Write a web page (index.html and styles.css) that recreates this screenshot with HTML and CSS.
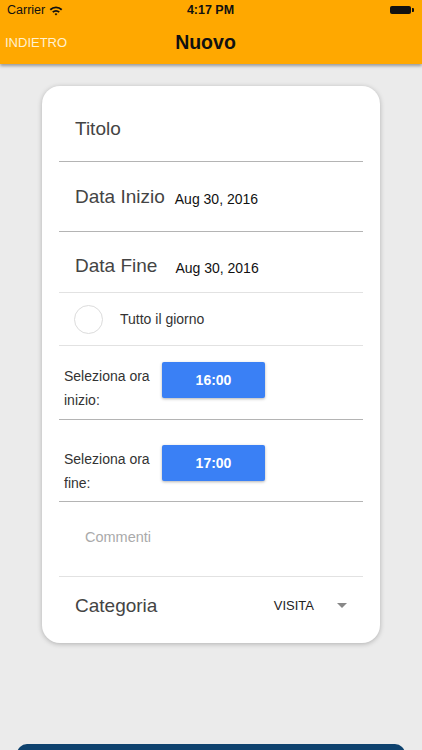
FILE: index.html
```html
<!DOCTYPE html>
<html lang="it">

<head>
    <meta charset="UTF-8">
    <meta name="viewport" content="width=device-width, initial-scale=1.0">
    <title>Nuovo</title>
    <link rel="stylesheet" href="styles.css">
</head>

<body>
    <!-- barra in alto -->
    <div class="top">
        <div class="status">
            <div class="carrier">
                Carrier
                <svg class="wifi" width="14" height="11" viewBox="0 0 13 10">
                    <path d="M0.6 3.6 A8.5 8.5 0 0 1 12.4 3.6 L11.2 4.9 A6.7 6.7 0 0 0 1.8 4.9 Z" fill="#111"/>
                    <path d="M2.9 5.9 A5.3 5.3 0 0 1 10.1 5.9 L8.9 7.2 A3.5 3.5 0 0 0 4.1 7.2 Z" fill="#111"/>
                    <path d="M5.2 8.2 A2 2 0 0 1 7.8 8.2 L6.5 9.6 Z" fill="#111"/>
                </svg>
            </div>
            <div class="clock">4:17 PM</div>
            <div class="battery">
                <span class="battery-body"></span><span class="battery-tip"></span>
            </div>
        </div>
        <div class="nav">
            <span class="back">INDIETRO</span>
            <span class="title">Nuovo</span>
        </div>
    </div>

    <!-- modulo -->
    <div class="card">
        <div class="row row-title">
            <span class="big">Titolo</span>
        </div>
        <div class="row row-start">
            <span class="big">Data Inizio</span>
            <span class="date">Aug 30, 2016</span>
        </div>
        <div class="row row-end">
            <span class="big">Data Fine</span>
            <span class="date date-end">Aug 30, 2016</span>
        </div>
        <div class="row row-check light">
            <span class="radio"></span>
            <span class="small">Tutto il giorno</span>
        </div>
        <div class="row row-time">
            <span class="time-label">Seleziona ora<br>inizio:</span>
            <button class="time-btn">16:00</button>
        </div>
        <div class="row row-time row-time2">
            <span class="time-label">Seleziona ora<br>fine:</span>
            <button class="time-btn">17:00</button>
        </div>
        <div class="row row-comment light">
            <span class="placeholder">Commenti</span>
        </div>
        <div class="row row-cat">
            <span class="big">Categoria</span>
            <span class="select">VISITA <span class="caret"></span></span>
        </div>
    </div>

    <div class="bottom-bar"></div>
</body>

</html>
```

FILE: styles.css
```css
html,
body {
    height: 100%;
}

body {
    margin: 0;
    background: #ebebeb;
    font-family: "Liberation Sans", Arial, sans-serif;
    overflow: hidden;
}

.top {
    background: #ffa800;
    box-shadow: 0 2px 3px rgba(0, 0, 0, 0.35);
    position: relative;
    z-index: 1;
}

.status {
    height: 20px;
    display: flex;
    align-items: center;
    justify-content: space-between;
    padding: 0 7px;
    font-size: 12.5px;
    color: #111;
}

.carrier {
    width: 120px;
    display: flex;
    align-items: center;
    gap: 4px;
}

.clock {
    font-weight: bold;
}

.battery {
    width: 120px;
    display: flex;
    justify-content: flex-end;
    align-items: center;
    margin-right: 1px;
}

.battery-body {
    width: 21px;
    height: 8px;
    background: #111;
    border-radius: 2px;
}

.battery-tip {
    width: 2px;
    height: 4px;
    background: #111;
    margin-left: 1px;
    border-radius: 0 1px 1px 0;
}

.nav {
    height: 44px;
    display: flex;
    align-items: center;
    padding-left: 5px;
}

.back {
    color: #fff1d0;
    font-size: 13px;
}

.title {
    margin-left: 108px;
    font-size: 19.5px;
    font-weight: bold;
    color: #111;
}

.card {
    margin: 22px 42px 0;
    background: #fff;
    border-radius: 18px;
    padding: 0 17px;
    box-shadow: 0 1px 5px rgba(0, 0, 0, 0.25);
}

.row {
    display: flex;
    border-bottom: 1.5px solid #b4b4b4;
    box-sizing: border-box;
}

.row.light {
    border-bottom: 1px solid #e2e2e2;
}

.big {
    font-size: 19px;
    color: #444;
}

.row-title {
    height: 76px;
    align-items: flex-end;
    padding: 0 16px 21px;
}

.row-start {
    height: 70px;
    align-items: flex-end;
    padding: 0 16px 23px;
}

.row-end {
    height: 61px;
    align-items: flex-end;
    padding: 0 16px 15px;
    border-bottom: 1px solid #e2e2e2;
}

.date {
    font-size: 14px;
    color: #111;
    margin-left: 10px;
    margin-bottom: 1px;
}

.date-end {
    margin-left: 18px;
}

.row-check {
    height: 53px;
    align-items: center;
    padding-left: 15px;
}

.radio {
    width: 27px;
    height: 27px;
    border: 1px solid #dcdcdc;
    border-radius: 50%;
}

.small {
    font-size: 14px;
    color: #333;
    margin-left: 17px;
}

.row-time {
    height: 74px;
    align-items: flex-start;
    padding: 16px 0 0 5px;
}

.row-time2 {
    height: 82px;
    padding-top: 25px;
}

.time-label {
    width: 98px;
    font-size: 14px;
    line-height: 24px;
    color: #333;
    margin-top: 2px;
}

.time-btn {
    width: 103px;
    height: 36px;
    border: none;
    border-radius: 2px;
    background: #3a80f5;
    color: #fff;
    font-family: inherit;
    font-size: 14px;
    font-weight: bold;
    box-shadow: 0 1px 3px rgba(0, 0, 0, 0.3);
}

.row-comment {
    height: 75px;
    align-items: center;
    padding: 0 0 4px 26px;
}

.placeholder {
    font-size: 14.5px;
    color: #aaa;
}

.row-cat {
    height: 66px;
    border-bottom: none;
    align-items: center;
    justify-content: space-between;
    padding: 0 16px 9px;
}

.select {
    font-size: 13px;
    color: #222;
    display: flex;
    align-items: center;
}

.caret {
    margin-left: 23px;
    width: 0;
    height: 0;
    border-left: 5px solid transparent;
    border-right: 5px solid transparent;
    border-top: 5px solid #888;
}

.bottom-bar {
    margin: 101px 17px 0;
    height: 40px;
    background: #0e426e;
    border-radius: 10px 10px 0 0;
}
```
